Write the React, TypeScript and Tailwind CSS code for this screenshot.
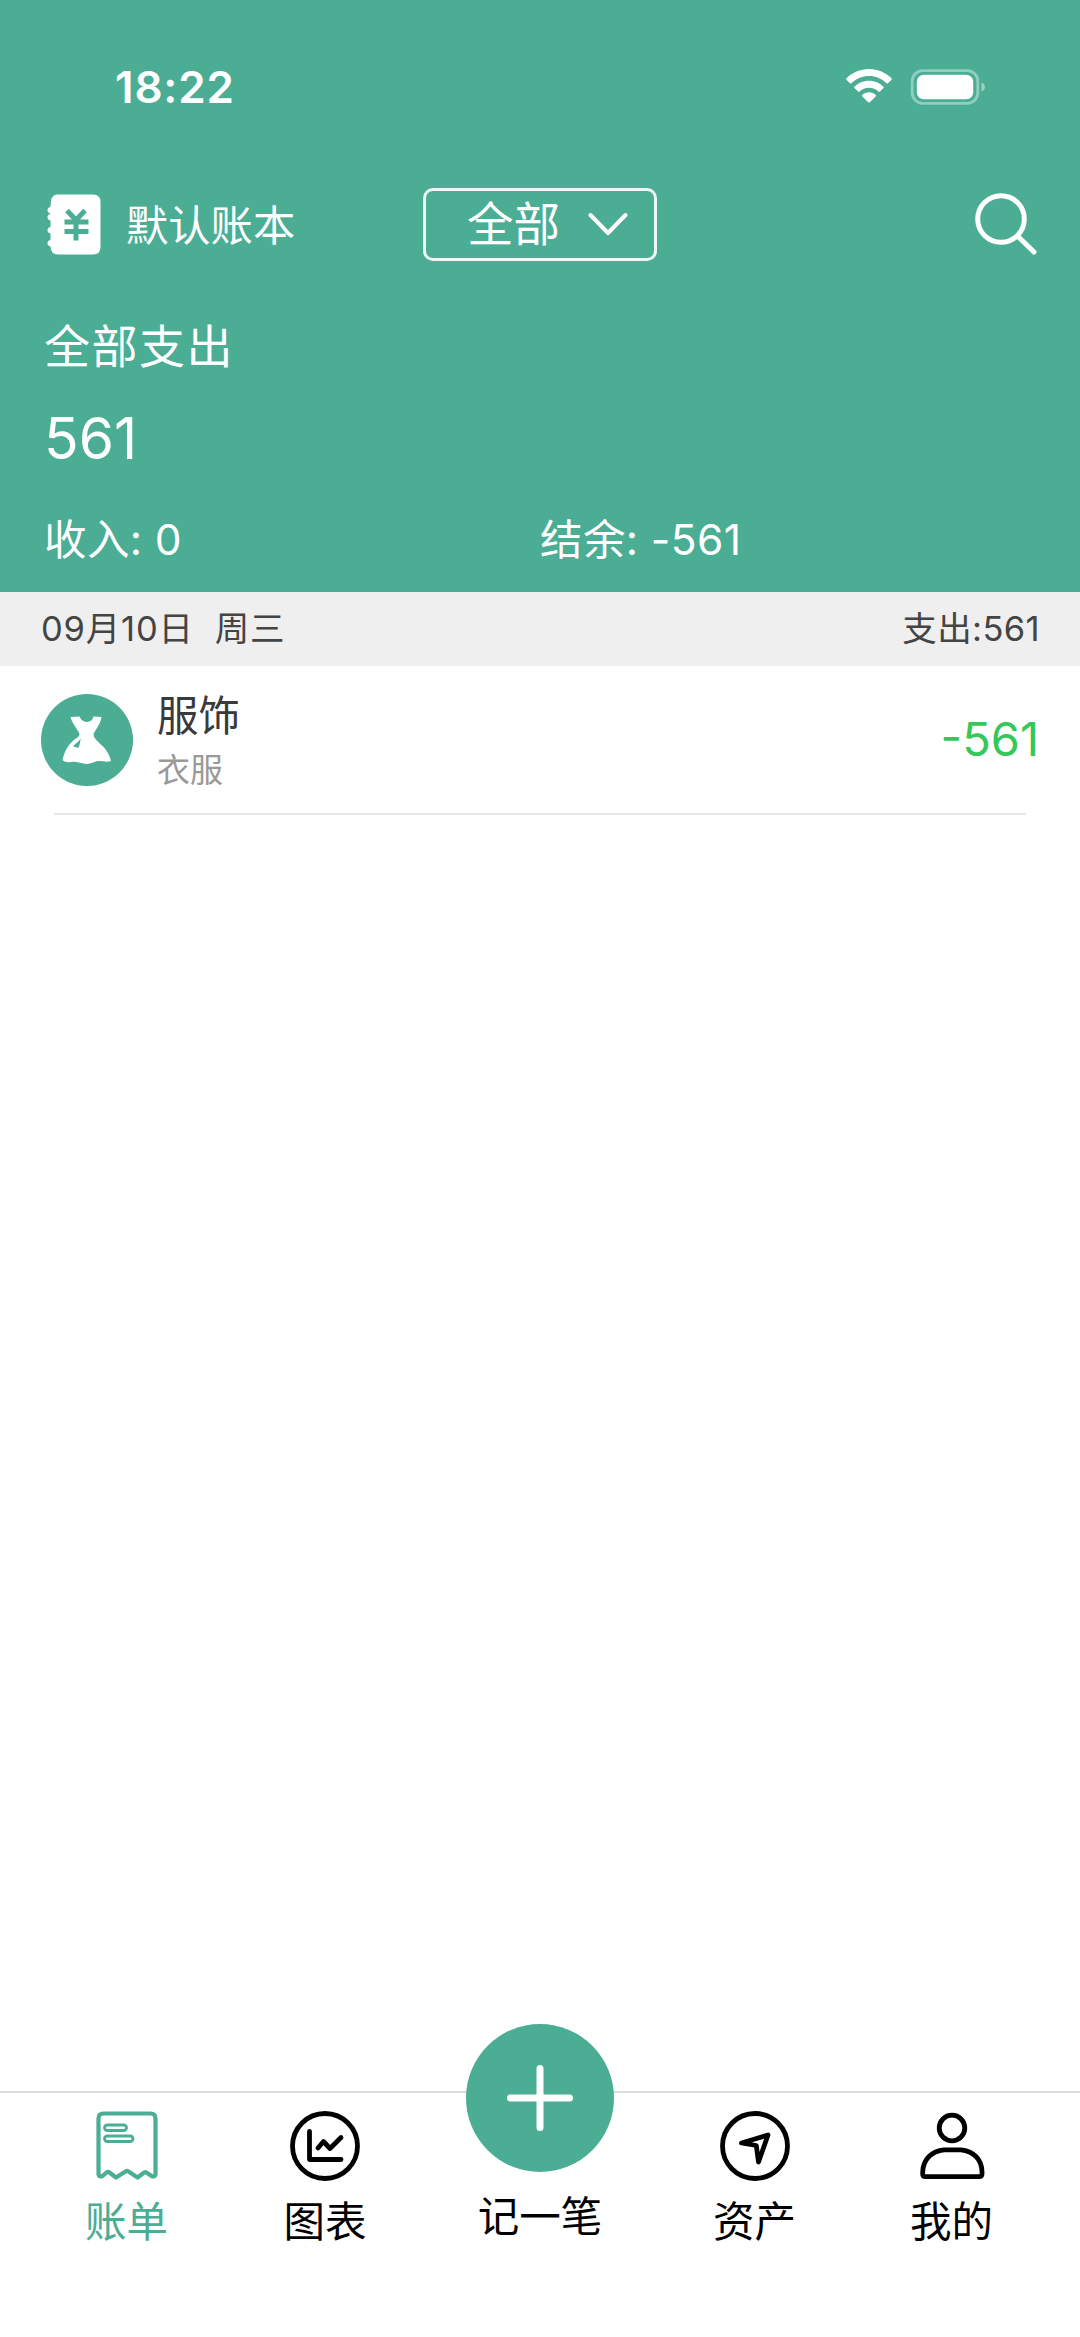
import type { ReactNode } from "react";

interface TabItemProps {
    label: string;
    icon: ReactNode;
    active?: boolean;
}

function WifiIcon() {
    return (
        <svg className="h-[34px] w-[46px]" viewBox="0 0 46 34" fill="#fff">
            <path d="M23 0C32 0 40 3.6 45.6 9.4C46 9.9 46 10.4 45.6 10.8L42 14.3C41.6 14.7 41 14.7 40.6 14.3C36 9.6 29.8 7 23 7C16.2 7 10 9.6 5.4 14.3C5 14.7 4.4 14.7 4 14.3L.4 10.8C0 10.4 0 9.9 .4 9.4C6 3.6 14 0 23 0Z" />
            <path d="M23 11.7C28.8 11.7 33.8 14 37.5 17.7C38 18.1 38 18.7 37.5 19.1L33.9 22.6C33.5 23 32.9 23 32.5 22.6C30 20.2 26.7 18.7 23 18.7C19.3 18.7 16 20.2 13.5 22.6C13.1 23 12.5 23 12.1 22.6L8.5 19.1C8 18.7 8 18.1 8.5 17.7C12.2 14 17.2 11.7 23 11.7Z" />
            <path d="M23 23.3C25.6 23.3 28 24.3 29.7 26C30.1 26.4 30.1 27 29.7 27.4L23.7 33.2C23.3 33.6 22.7 33.6 22.3 33.2L16.3 27.4C15.9 27 15.9 26.4 16.3 26C18 24.3 20.4 23.3 23 23.3Z" />
        </svg>
    );
}

function BatteryIcon() {
    return (
        <svg className="h-9 w-[76px]" viewBox="0 0 76 36" fill="none">
            <rect x="2.2" y="1.7" width="65.6" height="32.6" rx="10.5" stroke="#fff" strokeOpacity=".4" strokeWidth="2.8" />
            <rect x="6.8" y="5.8" width="56.4" height="24.4" rx="7" fill="#fff" />
            <path d="M71.500 13.500C76 15 76 21 71.500 22.500Z" fill="#fff" fillOpacity=".45" />
        </svg>
    );
}

function BookIcon() {
    return (
        <svg className="h-[61px] w-[54px]" viewBox="0 0 54 61" fill="none">
            <path
                d="M10 .5H46Q53.5 .5 53.5 8V53Q53.5 60.5 46 60.5H11Q4 60.5 3.5 52.5Q0 51.5 .5 48.5Q1 46 3.5 46V39.5Q0 38.5 .5 35.5Q1 33 3.5 33V26.5Q0 25.5 .5 22.5Q1 20 3.5 20V19.5Q0 18.5 .5 15.5Q1 13.5 3.5 12.5Q3.5 .5 10 .5Z"
                fill="#fff"
            />
            <path d="M20 16.500L29 26L38 16.500M17.500 28H41.500M17.500 37.500H41.500M29 26V46.500" stroke="#4aad94" strokeWidth="5" />
        </svg>
    );
}

function DressIcon() {
    return (
        <svg className="h-12 w-[50px]" viewBox="0 0 50 48">
            <path
                d="M8.5 1L17.500 .5C19 3.5 20.500 5.500 24.500 6C29 5.500 30.500 4 31.500 .5L39.500 1C38.500 8 34 13 31.500 18C31.500 24 40 28 44 34C46.500 37.500 48 41 49 45C44 47 39 44 34 45.500C31 46.500 28 48 24.500 48C18 47.500 15 45 9 46C5.500 46.500 2.500 46 .5 44C2.500 35 7 27.500 12.500 23.500C15 22 17.500 20.500 17.500 18C15 12 10 7.500 8.500 1Z"
                fill="#fff"
            />
            <path d="M18.500 22.500C17 26 13.500 27 11 30.500L16.500 31.800C17.500 29 18.500 26 18.500 22.500Z" fill="#4aad94" />
        </svg>
    );
}

function BillIcon() {
    return (
        <svg className="h-[72px] w-[72px]" viewBox="0 0 72 72" fill="none" stroke="currentColor" strokeLinejoin="round">
            <path d="M7.5 64.5V8.5Q7.5 3.5 12.5 3.5H59.5Q64.5 3.5 64.5 8.5V64.5Q64 67.5 60.5 66L55.5 62.5Q54 61.5 52.5 63L46.5 67.5L37.500 61.500Q36 60.500 34.500 61.500L25 67.5L18.5 62.5Q17 61.5 15.500 62.500L11.5 66Q8 67.5 7.5 64.5Z" strokeWidth="4.2" />
            <rect x="13.5" y="15" width="22" height="5.5" rx="2.75" strokeWidth="2.8" />
            <rect x="13.5" y="26" width="28.5" height="5.5" rx="2.75" strokeWidth="2.8" />
        </svg>
    );
}

function ChartIcon() {
    return (
        <svg className="h-[72px] w-[72px]" viewBox="0 0 72 72" fill="none" stroke="currentColor" strokeWidth="4.8" strokeLinecap="round" strokeLinejoin="round">
            <circle cx="36" cy="36" r="32.5" />
            <path d="M20.5 21.5V49.5H52" />
            <path d="M29 38L34.5 31.500L41 38.500L52 27.500" />
        </svg>
    );
}

function AssetIcon() {
    return (
        <svg className="h-[72px] w-[72px]" viewBox="0 0 72 72" fill="none" stroke="currentColor" strokeWidth="4.8" strokeLinecap="round" strokeLinejoin="round">
            <circle cx="36" cy="36" r="32.5" />
            <path d="M22.500 33L49 25L39.500 52L37.300 35.500Z" />
        </svg>
    );
}

function MineIcon() {
    return (
        <svg className="h-[72px] w-[72px]" viewBox="0 0 72 72" fill="none" stroke="currentColor" strokeWidth="4.8" strokeLinejoin="round">
            <circle cx="36" cy="18" r="12.800" />
            <path d="M28 39.800H45C57 41 66 49 66 62V64Q66 66.700 63 66.700H9.500Q6.700 66.700 6.700 64V62C7 49 16 41 28 39.800Z" />
        </svg>
    );
}

function TabItem({ label, icon, active = false }: TabItemProps) {
    return (
        <button
            type="button"
            className={
                active
                    ? "flex flex-col items-center pt-[17px] text-[#4aad94]"
                    : "flex flex-col items-center pt-[17px] text-black"
            }
        >
            {icon}
            <span className="mt-2 text-[41.5px] leading-[64px]">{label}</span>
        </button>
    );
}

function StatusBar() {
    return (
        <div className="flex h-[174px] items-start justify-between pt-[69px] pr-[94px] pl-[115px]">
            <span className="-mt-2 text-[44px] leading-[52px] font-semibold tracking-[0.8px]">18:22</span>
            <div className="flex items-start gap-[18px]">
                <WifiIcon />
                <BatteryIcon />
            </div>
        </div>
    );
}

function Summary() {
    return (
        <header className="h-[592px] bg-[#4aad94] text-white">
            <StatusBar />
            <div className="grid h-[100px] grid-cols-[376px_1fr_376px] items-center pr-[43px] pl-[47px]">
                <div className="flex items-center gap-[25px]">
                    <BookIcon />
                    <span className="pt-1 text-[42.3px] leading-[60px]">默认账本</span>
                </div>
                <button
                    type="button"
                    className="flex h-[73px] w-[234px] items-center justify-between rounded-[10px] border-[3px] border-white/90 pr-[26px] pl-[41px]"
                >
                    <span className="text-[46.5px] leading-[60px]">全部</span>
                    <svg className="h-6 w-10" viewBox="0 0 40 24" fill="none" stroke="#fff" strokeWidth="4" strokeLinecap="round" strokeLinejoin="round">
                        <path d="M2.5 3L20 21L37.5 3" />
                    </svg>
                </button>
                <svg className="size-[62px] justify-self-end" viewBox="0 0 62 62" fill="none" stroke="#fff" strokeWidth="5" strokeLinecap="round">
                    <circle cx="26" cy="26" r="23.3" />
                    <path d="M43 43.500L59 59" />
                </svg>
            </div>
            <div className="px-11">
                <p className="mt-[39px] text-[46px] leading-[66px] tracking-[1.5px]">全部支出</p>
                <p className="mt-[25px] text-[57px] leading-[70px]">561</p>
                <div className="mt-[34px] grid grid-cols-2 text-[42.5px] leading-[64px] tracking-[0.4px]">
                    <p>收入: 0</p>
                    <p>结余: -561</p>
                </div>
            </div>
        </header>
    );
}

export default function App() {
    return (
        <div className="flex h-[2337px] w-[1080px] flex-col bg-white font-[Inter,'Noto_Sans_CJK_SC',sans-serif]">
            <Summary />

            <main className="flex-1">
                <div className="flex h-[74px] items-center justify-between bg-[#efefef] pr-10 pl-[41px] text-[34.5px] text-[#444]">
                    <span className="tracking-[0.8px] whitespace-pre">09月10日  周三</span>
                    <span className="tracking-[0.4px]">支出:561</span>
                </div>
                <div className="flex h-[147px] items-center pr-[41px] pl-[41px]">
                    <div className="flex size-[92px] items-center justify-center rounded-full bg-[#4aad94]">
                        <DressIcon />
                    </div>
                    <div className="ml-6 flex-1 pt-[5px]">
                        <p className="text-[41.5px] leading-[56px] text-[#3a3a3a]">服饰</p>
                        <p className="text-[33px] leading-[52px] text-[#999]">衣服</p>
                    </div>
                    <span className="text-[47px] text-[#34c759]">-561</span>
                </div>
                <div className="mx-[54px] h-[2px] bg-[#e6e6e6]" />
            </main>

            <nav className="grid h-[246px] grid-cols-[199px_198px_232px_197px_197px] border-t-2 border-[#dcdcdc] pl-[27px]">
                <TabItem label="账单" icon={<BillIcon />} active />
                <TabItem label="图表" icon={<ChartIcon />} />
                <button type="button" className="-mt-[69px] flex flex-col items-center text-black">
                    <span className="flex size-[148px] items-center justify-center rounded-full bg-[#4aad94]">
                        <svg className="size-[66px]" viewBox="0 0 66 66" stroke="#fff" strokeWidth="7" strokeLinecap="round">
                            <path d="M33 3.5V62.5M3.5 33H62.5" />
                        </svg>
                    </span>
                    <span className="mt-[13px] text-[41.5px] leading-[64px]">记一笔</span>
                </button>
                <TabItem label="资产" icon={<AssetIcon />} />
                <TabItem label="我的" icon={<MineIcon />} />
            </nav>
        </div>
    );
}
